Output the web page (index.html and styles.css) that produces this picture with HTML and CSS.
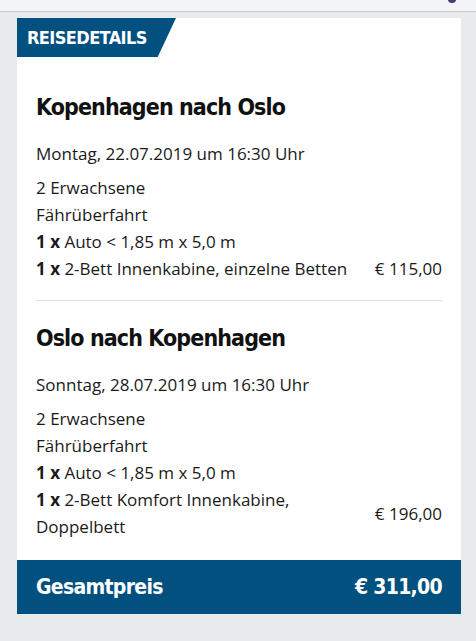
FILE: index.html
```html
<!DOCTYPE html>
<html lang="de">
<head>
<meta charset="utf-8">
<link rel="stylesheet" href="styles.css">
</head>
<body>
<div class="topbar"><span class="topdot"></span></div>
<main class="page">
  <section class="card">
    <div class="tag">REISEDETAILS</div>
    <div class="trip first">
      <h2 class="title">Kopenhagen nach Oslo</h2>
      <p class="date">Montag, 22.07.2019 um 16:30 Uhr</p>
      <div class="lines">
        <div class="line">2 Erwachsene</div>
        <div class="line">Fährüberfahrt</div>
        <div class="line"><b>1 x</b> Auto &lt; 1,85 m x 5,0 m</div>
        <div class="row">
          <div class="line"><b>1 x</b> 2-Bett Innenkabine, einzelne Betten</div>
          <div class="price">€ 115,00</div>
        </div>
      </div>
    </div>
    <div class="trip second">
      <h2 class="title">Oslo nach Kopenhagen</h2>
      <p class="date">Sonntag, 28.07.2019 um 16:30 Uhr</p>
      <div class="lines">
        <div class="line">2 Erwachsene</div>
        <div class="line">Fährüberfahrt</div>
        <div class="line"><b>1 x</b> Auto &lt; 1,85 m x 5,0 m</div>
        <div class="row">
          <div class="line narrow"><b>1 x</b> 2-Bett Komfort Innenkabine,<br>Doppelbett</div>
          <div class="price">€ 196,00</div>
        </div>
      </div>
    </div>
    <div class="total">
      <span>Gesamtpreis</span>
      <span>€ 311,00</span>
    </div>
  </section>
</main>
</body>
</html>
```

FILE: styles.css
```css
html, body {
  margin: 0;
  padding: 0;
}
body {
  background: #e8ebec;
  font-family: "Open Sans", "Liberation Sans", sans-serif;
  color: #1a1a1a;
  width: 476px;
  height: 641px;
  overflow: hidden;
}
.topbar {
  height: 11px;
  background: #f2f4f5;
  border-bottom: 1px solid #c9cbcc;
  position: relative;
}
.topdot {
  position: absolute;
  left: 448px;
  top: -4px;
  width: 8px;
  height: 7px;
  border-radius: 50%;
  background: #4b3a78;
}
.page {
  padding: 6px 15px 0 17px;
}
.card {
  background: #fff;
  width: 444px;
}
.tag {
  box-sizing: border-box;
  width: 159px;
  height: 39px;
  background: #01507f;
  clip-path: polygon(0 0, 100% 0, 88.5% 100%, 0 100%);
  color: #fff;
  font-family: "DejaVu Sans Condensed", "DejaVu Sans", sans-serif;
  font-weight: bold;
  font-size: 18px;
  letter-spacing: -0.6px;
  line-height: 39px;
  padding-left: 10px;
}
.trip {
  padding: 0 19px;
}
.title {
  margin: 0;
  font-family: "DejaVu Sans Condensed", "DejaVu Sans", sans-serif;
  font-weight: bold;
  font-size: 23px;
  letter-spacing: -0.9px;
  color: #111;
  line-height: 30px;
}
.first .title {
  margin-top: 35px;
}
.date {
  margin: 20px 0 0;
  font-size: 17px;
  line-height: 24px;
}
.lines {
  margin-top: 8px;
}
.line {
  font-size: 17px;
  line-height: 27px;
}
.line b {
  font-weight: 700;
}
.row {
  display: flex;
  justify-content: space-between;
  align-items: center;
}
.narrow {
  width: 300px;
}
.price {
  font-size: 17px;
  line-height: 27px;
}
.first {
  padding-bottom: 18px;
}
.second {
  border-top: 1px solid #dedede;
  margin: 0 19px;
  padding: 22px 0 20px;
}
.total {
  display: flex;
  justify-content: space-between;
  align-items: center;
  height: 54px;
  background: #01507f;
  color: #fff;
  padding: 0 19px;
  font-family: "DejaVu Sans Condensed", "DejaVu Sans", sans-serif;
  font-weight: bold;
  font-size: 21px;
  letter-spacing: -0.7px;
}
```
